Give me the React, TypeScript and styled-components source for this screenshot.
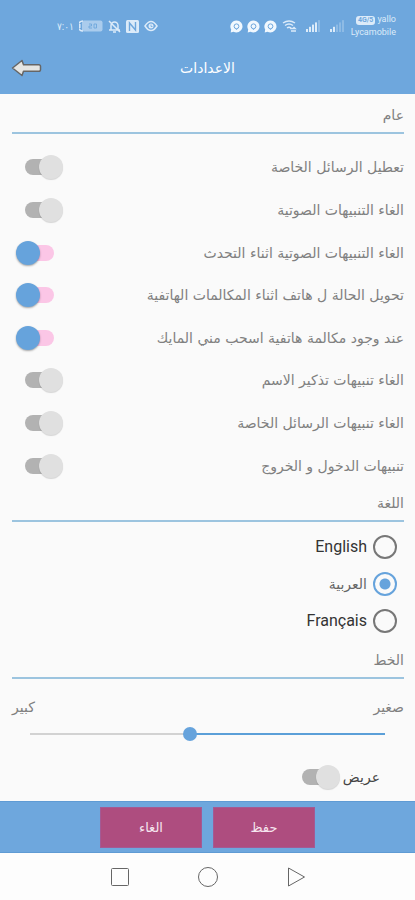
import React, { useState } from "react";
import styled, { createGlobalStyle } from "styled-components";

const blue = "#6ea7dd";

const GlobalStyle = createGlobalStyle`
  *, *::before, *::after { box-sizing: border-box; }
  body { margin: 0; background: #fafafa; font-family: "DejaVu Sans", sans-serif; }
`;

const Page = styled.div`
  display: flex;
  flex-direction: column;
  min-height: 100vh;
  color: #808080;
  font-size: 14px;
`;

const Header = styled.header`
  background: ${blue};
  color: #fff;
`;

const StatusBar = styled.div`
  display: flex;
  justify-content: space-between;
  align-items: center;
  height: 42px;
  padding: 10px 19px 0 57px;
  color: #dcebf9;
  font-family: Roboto, "DejaVu Sans Condensed", sans-serif;
`;

const StatusGroup = styled.div`
  display: flex;
  align-items: center;
  gap: 5px;
`;

const ChatGroup = styled.div`
  display: flex;
  gap: 4px;
`;

const SignalGroup = styled.div`
  display: flex;
  gap: 10px;
  padding: 0 2px 0 4px;
`;

const Clock = styled.span`
  font-size: 10px;
`;

const Carrier = styled.div`
  display: flex;
  flex-direction: column;
  align-items: flex-end;
  font-size: 9px;
  line-height: 13px;
`;

const NetBadge = styled.span`
  display: inline-block;
  padding: 0 2px;
  margin-right: 2px;
  border-radius: 3px;
  background: #dcebf9;
  color: ${blue};
  font-size: 7px;
  line-height: 9px;
  font-weight: 700;
`;

const TitleBar = styled.div`
  display: grid;
  grid-template-columns: 1fr auto 1fr;
  align-items: center;
  height: 52px;
  padding: 0 11px;
`;

const Title = styled.h1`
  margin: 0;
  font-size: 14px;
  font-weight: 400;
`;

const BackButton = styled.button`
  display: flex;
  justify-self: start;
  padding: 0;
  border: 0;
  background: none;
`;

const Main = styled.main`
  display: flex;
  flex: 1;
  flex-direction: column;
  padding: 5px 11px 0 12px;
`;

const SectionTitle = styled.h2<{ $spaced?: boolean }>`
  margin: ${(p) => (p.$spaced ? "5px" : "0")} 0 0;
  border-bottom: 2px solid #9cc4df;
  font-size: 14px;
  font-weight: 400;
  line-height: 33px;
`;

const SwitchList = styled.div`
  display: flex;
  flex: 1;
  flex-direction: column;
  padding-top: 12px;
`;

const SwitchRow = styled.label`
  display: flex;
  flex: 1;
  align-items: center;
  justify-content: space-between;
  min-height: 40px;
  padding-left: 4px;
`;

const Switch = styled.input`
  appearance: none;
  position: relative;
  flex: none;
  width: 48px;
  height: 24px;
  margin: 0;

  &::before {
    content: "";
    position: absolute;
    inset: 4px 10px 4px 9px;
    border-radius: 8px;
    background: #b2b2b2;
  }
  &::after {
    content: "";
    position: absolute;
    top: 0;
    right: 1px;
    width: 24px;
    height: 24px;
    border-radius: 50%;
    background: #e0e0e0;
    box-shadow: 0 1px 1px rgba(0, 0, 0, 0.15);
  }
  &:checked::before { background: #fbc6e6; }
  &:checked::after {
    right: 24px;
    background: #66a3dc;
    box-shadow: 0 1px 2px rgba(0, 0, 0, 0.35);
  }
`;

const RadioList = styled.div`
  display: flex;
  flex-direction: column;
  align-items: flex-start;
  padding: 6px 7px 0 0;
`;

const RadioRow = styled.label`
  display: flex;
  align-items: center;
  gap: 6px;
  height: 37px;
  color: #333;
  font-family: Roboto, "DejaVu Sans", sans-serif;
  font-size: 16px;
`;

const ArabicLabel = styled.span`
  font-size: 14px;
  color: #666;
`;

const Radio = styled.input`
  appearance: none;
  width: 24px;
  height: 24px;
  margin: 0;
  border: 2px solid #777;
  border-radius: 50%;

  &:checked {
    border-color: #66a3dc;
    background: radial-gradient(circle, #66a3dc 5px, transparent 6px);
  }
`;

const ScaleLabels = styled.div`
  display: flex;
  justify-content: space-between;
  padding-top: 18px;
  line-height: 20px;
`;

const Slider = styled.input<{ $value: number }>`
  appearance: none;
  height: 14px;
  margin: 10px 19px 0 18px;
  background:
    linear-gradient(to left, #5b9fd8 ${(p) => p.$value}%, #d2d2d2 ${(p) => p.$value}%)
    center / 100% 2px no-repeat;

  &::-webkit-slider-thumb {
    appearance: none;
    width: 14px;
    height: 14px;
    border-radius: 50%;
    background: #66a3dc;
  }
`;

const WideRow = styled.label`
  display: flex;
  align-items: center;
  align-self: flex-start;
  gap: 2px;
  padding: 24px 24px 12px 0;
  color: #444;
`;

const Footer = styled.footer`
  display: flex;
  justify-content: center;
  gap: 11px;
  padding: 5px 0 4px;
  border-top: 1px solid #5f9bd4;
  border-bottom: 1px solid #5f9bd4;
  background: ${blue};
`;

const ActionButton = styled.button`
  width: 102px;
  height: 41px;
  padding: 0;
  border: 1px solid #a35a94;
  background: #ae4d7f;
  color: #f6e6ef;
  font-family: inherit;
  font-size: 13px;
`;

const NavBar = styled.nav`
  display: flex;
  justify-content: center;
  gap: 64px;
  height: 47px;
  background: #fdfdfd;
`;

const NavButton = styled.button`
  display: flex;
  align-items: center;
  padding: 0;
  border: 0;
  background: none;
`;

const ChatIcon = () => (
  <svg width="13" height="13" viewBox="0 0 13 13">
    <path d="M6.5 0.5a6 6 0 1 1-3 11.2L0.7 12.4 1.2 9.5A6 6 0 0 1 6.5 0.5z" fill="#f1f8fe" />
    <circle cx="6.5" cy="6.3" r="2.4" fill="none" stroke={blue} />
    <path d="M5.5 8.500l1 1.200 1-1.200" fill="none" stroke={blue} strokeWidth="0.8" />
  </svg>
);

const SignalIcon = ({ level }: { level: number }) => (
  <svg width="14" height="12" viewBox="0 0 14 12" fill="currentColor">
    {[0, 1, 2, 3, 4].map((i) => (
      <rect key={i} x={i * 3} y={9 - i * 2.2} width="2" height={3 + i * 2.2} opacity={i < level ? 1 : 0.3} />
    ))}
  </svg>
);

const options = [
  "تعطيل الرسائل الخاصة",
  "الغاء التنبيهات الصوتية",
  "الغاء التنبيهات الصوتية اثناء التحدث",
  "تحويل الحالة ل هاتف اثناء المكالمات الهاتفية",
  "عند وجود مكالمة هاتفية اسحب مني المايك",
  "الغاء تنبيهات تذكير الاسم",
  "الغاء تنبيهات الرسائل الخاصة",
  "تنبيهات الدخول و الخروج",
];

export default function App() {
  const [size, setSize] = useState(55);
  return (
    <Page dir="rtl" lang="ar">
      <GlobalStyle />
      <Header>
        <StatusBar dir="ltr">
          <StatusGroup>
            <Clock>٧:٠١</Clock>
            <svg width="24" height="12" viewBox="0 0 24 12">
              <rect x="3" y="0.5" width="20.5" height="11" rx="2" fill="currentColor" opacity="0.55" />
              <path d="M4 1a5 5 0 0 0 0 10M0.800 4v4" fill="none" stroke="currentColor" strokeWidth="1.500" />
              <path d="M10 4h2.500v2H10v2h3M15 4v4h2.500V4z" fill="none" stroke={blue} strokeWidth="0.9" />
            </svg>
            <svg width="13" height="13" viewBox="0 0 13 13" fill="none" stroke="currentColor" strokeWidth="1.500">
              <path d="M3 9.500V5.500a3.500 3.500 0 0 1 7 0v4M1 10h11M5 12h3M1 1l11 11" />
            </svg>
            <svg width="13" height="13" viewBox="0 0 13 13">
              <rect width="13" height="13" rx="1.500" fill="currentColor" />
              <path d="M3.500 11V3l6 7V2" fill="none" stroke={blue} strokeWidth="1.400" />
            </svg>
            <svg width="14" height="12" viewBox="0 0 14 12" fill="none" stroke="currentColor" strokeWidth="1.500">
              <path d="M1 6q6-9 12 0q-6 9-12 0z" />
              <circle cx="7" cy="6" r="2.500" fill="currentColor" stroke="none" />
              <path d="M7 4.500V6.500h1.500" stroke={blue} strokeWidth="0.8" />
            </svg>
          </StatusGroup>
          <StatusGroup>
            <ChatGroup>
              <ChatIcon />
              <ChatIcon />
              <ChatIcon />
            </ChatGroup>
            <svg width="15" height="12" viewBox="0 0 15 12" fill="none" stroke="currentColor" strokeWidth="1.500">
              <path d="M1 3q6-4 12 0M3 5.500q4-3 8 0M5 8q2-1.500 4 0M8 8.500h5l-1.500-1.500M14 11H9" />
            </svg>
            <SignalGroup>
              <SignalIcon level={4} />
              <SignalIcon level={2} />
            </SignalGroup>
            <Carrier>
              <span><NetBadge>4G/5</NetBadge>yallo</span>
              <span>Lycamobile</span>
            </Carrier>
          </StatusGroup>
        </StatusBar>
        <TitleBar dir="ltr">
          <BackButton aria-label="رجوع">
            <svg width="31" height="20" viewBox="0 0 31 20">
              <path d="M1.500 10L11 2.500l1.500 4.300H28a1.500 1.500 0 0 1 1.500 1.500v3.500a1.500 1.500 0 0 1-1.500 1.500H12.500L11 17.500z" fill="#e6e6e3" stroke="#666" strokeWidth="1.500" strokeLinejoin="round" />
            </svg>
          </BackButton>
          <Title dir="rtl">الاعدادات</Title>
        </TitleBar>
      </Header>
      <Main>
        <SectionTitle>عام</SectionTitle>
        <SwitchList>
          {options.map((text, i) => (
            <SwitchRow key={text}>
              {text}
              <Switch type="checkbox" defaultChecked={i >= 2 && i <= 4} />
            </SwitchRow>
          ))}
        </SwitchList>
        <SectionTitle>اللغة</SectionTitle>
        <RadioList role="radiogroup" aria-label="اللغة">
          <RadioRow><Radio type="radio" name="language" />English</RadioRow>
          <RadioRow><Radio type="radio" name="language" defaultChecked /><ArabicLabel>العربية</ArabicLabel></RadioRow>
          <RadioRow><Radio type="radio" name="language" />Français</RadioRow>
        </RadioList>
        <SectionTitle $spaced>الخط</SectionTitle>
        <ScaleLabels><span>صغير</span><span>كبير</span></ScaleLabels>
        <Slider type="range" aria-label="الخط" value={size} $value={size} onChange={(e) => setSize(Number(e.target.value))} />
        <WideRow>عريض<Switch type="checkbox" /></WideRow>
      </Main>
      <Footer>
        <ActionButton>حفظ</ActionButton>
        <ActionButton>الغاء</ActionButton>
      </Footer>
      <NavBar dir="ltr">
        <NavButton aria-label="التطبيقات الأخيرة">
          <svg width="24" height="24" viewBox="0 0 24 24" fill="none" stroke="#666"><rect x="3.500" y="3.500" width="17" height="17" rx="1" /></svg>
        </NavButton>
        <NavButton aria-label="الرئيسية">
          <svg width="24" height="24" viewBox="0 0 24 24" fill="none" stroke="#666"><circle cx="12" cy="12" r="9.500" /></svg>
        </NavButton>
        <NavButton aria-label="السابق">
          <svg width="24" height="24" viewBox="0 0 24 24" fill="none" stroke="#666"><path d="M4.500 3v18l16-9z" strokeLinejoin="round" /></svg>
        </NavButton>
      </NavBar>
    </Page>
  );
}
